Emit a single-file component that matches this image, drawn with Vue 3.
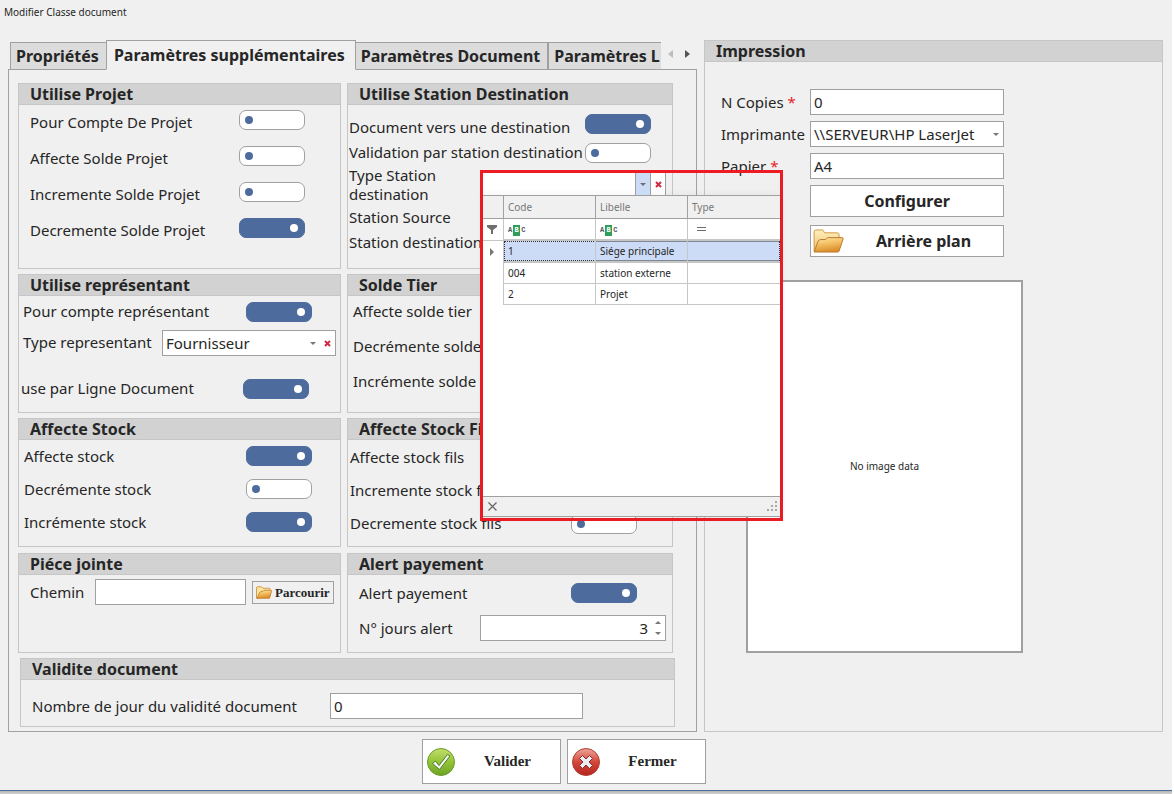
<script setup>
import { ref, reactive } from 'vue'

const tabs = ['Propriétés', 'Paramètres supplémentaires', 'Paramètres Document', 'Paramètres L']
const activeTab = ref(1)

const projet = reactive([
  { id: 'pcp', label: 'Pour Compte De Projet', on: false },
  { id: 'asp', label: 'Affecte Solde Projet', on: false },
  { id: 'isp', label: 'Incremente Solde Projet', on: false },
  { id: 'dsp', label: 'Decremente Solde Projet', on: true }
])
const tier = reactive([
  { id: 'ast', label: 'Affecte solde tier', on: false },
  { id: 'dst', label: 'Decrémente solde', on: false },
  { id: 'ist', label: 'Incrémente solde', on: false }
])
const stock = reactive([
  { id: 'as', label: 'Affecte stock', on: true },
  { id: 'ds', label: 'Decrémente stock', on: false },
  { id: 'is', label: 'Incrémente stock', on: true }
])
const fils = reactive([
  { id: 'asf', label: 'Affecte stock fils', on: false },
  { id: 'isf', label: 'Incremente stock fils', on: false },
  { id: 'dsf', label: 'Decremente stock fils', on: false }
])
const form = reactive({
  versDestination: true,
  validationStation: false,
  compteRepresentant: true,
  parLigne: true,
  alert: true,
  jours: '3',
  chemin: '',
  validite: '0',
  copies: '0',
  papier: 'A4',
  typeStation: ''
})
const stations = [
  { code: '1', libelle: 'Siége principale' },
  { code: '004', libelle: 'station externe' },
  { code: '2', libelle: 'Projet' }
]
const selected = ref('1')
</script>

<template>
  <div class="window">
    <header class="title">Modifier Classe document</header>

    <main class="main">
      <div class="left">
        <div class="tabbar">
          <div class="tablist" role="tablist">
            <button
              v-for="(t, i) in tabs"
              :key="t"
              type="button"
              role="tab"
              class="tab"
              :class="{ active: i === activeTab }"
              :aria-selected="i === activeTab"
              @click="activeTab = i"
            >{{ t }}</button>
          </div>
          <div class="tabnav">
            <button type="button" aria-label="Onglet précédent" disabled>
              <svg width="5" height="8" viewBox="0 0 5 8"><path d="M5 0v8L0 4z" fill="#bdbdbd" /></svg>
            </button>
            <button type="button" aria-label="Onglet suivant">
              <svg width="5" height="8" viewBox="0 0 5 8"><path d="M0 0v8l5-4z" fill="#555" /></svg>
            </button>
          </div>
        </div>

        <div class="panel">
          <div class="groups">
            <section class="group g-projet">
              <h2>Utilise Projet</h2>
              <div class="body">
                <div v-for="r in projet" :key="r.id" class="row">
                  <label :for="r.id">{{ r.label }}</label>
                  <input :id="r.id" v-model="r.on" type="checkbox" role="switch" class="switch" />
                </div>
              </div>
            </section>

            <section class="group g-station">
              <h2>Utilise Station Destination</h2>
              <div class="body">
                <div class="row">
                  <label for="vd">Document vers une destination</label>
                  <input id="vd" v-model="form.versDestination" type="checkbox" role="switch" class="switch up" />
                </div>
                <div class="row">
                  <label for="vs">Validation par station destination</label>
                  <input id="vs" v-model="form.validationStation" type="checkbox" role="switch" class="switch" />
                </div>
                <div class="row two">
                  <label for="ts">Type Station<br />destination</label>
                  <div class="lookup">
                    <div class="frame">
                      <div class="combo">
                        <input id="ts" v-model="form.typeStation" type="text" />
                        <button type="button" class="drop" aria-label="Ouvrir">
                          <svg width="6" height="3" viewBox="0 0 6 3"><path d="M0 0h6L3 3z" fill="#6b6f78" /></svg>
                        </button>
                        <button type="button" class="clear" aria-label="Effacer">
                          <svg width="7" height="7" viewBox="0 0 7 7"><path d="M1 1l5 5M6 1L1 6" stroke="#d12a45" stroke-width="2" /></svg>
                        </button>
                      </div>
                      <div class="popup">
                        <table class="grid">
                          <colgroup><col class="c0" /><col /><col /><col /></colgroup>
                          <thead>
                            <tr><th></th><th>Code</th><th>Libelle</th><th>Type</th></tr>
                            <tr class="filter">
                              <td class="ind">
                                <svg width="10" height="9" viewBox="0 0 10 9"><path d="M0 0h10v2L6 5v4H4V5L0 2z" fill="#6e6e6e" /></svg>
                              </td>
                              <td><span class="abc">A<b>B</b>C</span></td>
                              <td><span class="abc">A<b>B</b>C</span></td>
                              <td class="eq">
                                <svg width="9" height="4" viewBox="0 0 9 4"><path d="M0 .5h9M0 3.5h9" stroke="#6e6e6e" /></svg>
                              </td>
                            </tr>
                          </thead>
                          <tbody>
                            <tr
                              v-for="s in stations"
                              :key="s.code"
                              :class="{ sel: s.code === selected }"
                              @click="selected = s.code"
                            >
                              <td class="ind">
                                <svg v-if="s.code === selected" width="4" height="8" viewBox="0 0 4 8"><path d="M0 0v8l4-4z" fill="#777" /></svg>
                              </td>
                              <td>{{ s.code }}</td>
                              <td>{{ s.libelle }}</td>
                              <td></td>
                            </tr>
                          </tbody>
                        </table>
                        <div class="status">
                          <button type="button" aria-label="Fermer la liste">
                            <svg width="9" height="9" viewBox="0 0 9 9"><path d="M.5.5l8 8M8.5.5l-8 8" stroke="#666" stroke-width="1.3" /></svg>
                          </button>
                          <svg width="11" height="11" viewBox="0 0 11 11" fill="#a8a8a8">
                            <path d="M8 0h2v2H8zM4 4h2v2H4zM8 4h2v2H8zM0 8h2v2H0zM4 8h2v2H4zM8 8h2v2H8z" />
                          </svg>
                        </div>
                      </div>
                    </div>
                  </div>
                </div>
                <div class="row"><span>Station Source</span></div>
                <div class="row"><span>Station destination</span></div>
              </div>
            </section>

            <section class="group g-rep">
              <h2>Utilise représentant</h2>
              <div class="body">
                <div class="row">
                  <label for="cr">Pour compte représentant</label>
                  <input id="cr" v-model="form.compteRepresentant" type="checkbox" role="switch" class="switch" />
                </div>
                <div class="row type">
                  <label for="tr">Type representant</label>
                  <div class="select">
                    <select id="tr"><option>Fournisseur</option></select>
                    <svg class="arrow" width="6" height="3" viewBox="0 0 6 3"><path d="M0 0h6L3 3z" fill="#777" /></svg>
                    <button type="button" class="clear" aria-label="Effacer">
                      <svg width="7" height="7" viewBox="0 0 7 7"><path d="M1 1l5 5M6 1L1 6" stroke="#d12a45" stroke-width="2" /></svg>
                    </button>
                  </div>
                </div>
                <div class="row ligne">
                  <label for="pl">use par Ligne Document</label>
                  <input id="pl" v-model="form.parLigne" type="checkbox" role="switch" class="switch" />
                </div>
              </div>
            </section>

            <section class="group g-tier">
              <h2>Solde Tier</h2>
              <div class="body">
                <div v-for="r in tier" :key="r.id" class="row">
                  <label :for="r.id">{{ r.label }}</label>
                  <input :id="r.id" v-model="r.on" type="checkbox" role="switch" class="switch" />
                </div>
              </div>
            </section>

            <section class="group g-stock">
              <h2>Affecte Stock</h2>
              <div class="body">
                <div v-for="r in stock" :key="r.id" class="row">
                  <label :for="r.id">{{ r.label }}</label>
                  <input :id="r.id" v-model="r.on" type="checkbox" role="switch" class="switch" />
                </div>
              </div>
            </section>

            <section class="group g-fils">
              <h2>Affecte Stock Fils</h2>
              <div class="body">
                <div v-for="r in fils" :key="r.id" class="row">
                  <label :for="r.id">{{ r.label }}</label>
                  <input :id="r.id" v-model="r.on" type="checkbox" role="switch" class="switch" />
                </div>
              </div>
            </section>

            <section class="group g-piece">
              <h2>Piéce jointe</h2>
              <div class="body">
                <div class="row">
                  <label for="ch">Chemin</label>
                  <input id="ch" v-model="form.chemin" type="text" class="field" />
                  <button type="button" class="browse">
                    <svg width="16" height="13" viewBox="0 0 32 25">
                      <path d="M1 24V3q0-2 2-2h8l3 3h13q1 0 1 2v14z" fill="#fbe3a0" stroke="#c98a35" stroke-width="1.6" />
                      <path d="M2 24l5-11q1-2 3-2l4-1 2-2h14q2 0 1 2l-4 14z" fill="url(#fold)" stroke="#c07a28" stroke-width="1.6" />
                    </svg>
                    Parcourir
                  </button>
                </div>
              </div>
            </section>

            <section class="group g-alert">
              <h2>Alert payement</h2>
              <div class="body">
                <div class="row">
                  <label for="al">Alert payement</label>
                  <input id="al" v-model="form.alert" type="checkbox" role="switch" class="switch" />
                </div>
                <div class="row jours">
                  <label for="nj">N° jours alert</label>
                  <div class="spin">
                    <input id="nj" v-model="form.jours" type="text" />
                    <div class="steps">
                      <button type="button" aria-label="Augmenter">
                        <svg width="6" height="3" viewBox="0 0 6 3"><path d="M0 3h6L3 0z" fill="#777" /></svg>
                      </button>
                      <button type="button" aria-label="Diminuer">
                        <svg width="6" height="3" viewBox="0 0 6 3"><path d="M0 0h6L3 3z" fill="#777" /></svg>
                      </button>
                    </div>
                  </div>
                </div>
              </div>
            </section>
          </div>

          <section class="group g-valid">
            <h2>Validite document</h2>
            <div class="body">
              <div class="row">
                <label for="va">Nombre de jour du validité document</label>
                <input id="va" v-model="form.validite" type="text" class="field" />
              </div>
            </div>
          </section>
        </div>
      </div>

      <section class="group g-print">
        <h2>Impression</h2>
        <div class="body">
          <div class="print">
            <label for="nc">N Copies <i>*</i></label>
            <input id="nc" v-model="form.copies" type="text" class="field" />
            <label for="im">Imprimante</label>
            <div class="select">
              <select id="im"><option>\\SERVEUR\HP LaserJet</option></select>
              <svg class="arrow" width="6" height="3" viewBox="0 0 6 3"><path d="M0 0h6L3 3z" fill="#777" /></svg>
            </div>
            <label for="pa">Papier <i>*</i></label>
            <input id="pa" v-model="form.papier" type="text" class="field" />
            <button type="button" class="wide">Configurer</button>
            <button type="button" class="wide plan">
              <svg width="31" height="24" viewBox="0 0 32 25">
                <defs>
                  <linearGradient id="fold" x1="0" y1="0" x2="0.3" y2="1">
                    <stop offset="0" stop-color="#fdeaa8" />
                    <stop offset="0.5" stop-color="#f3bf62" />
                    <stop offset="1" stop-color="#dc8f2c" />
                  </linearGradient>
                  <linearGradient id="back" x1="0" y1="0" x2="0" y2="1">
                    <stop offset="0" stop-color="#fff2c0" />
                    <stop offset="1" stop-color="#eebb66" />
                  </linearGradient>
                </defs>
                <path d="M1 23V3q0-2 2-2h7l2 3h13q2 0 2 2v14z" fill="url(#back)" stroke="#cf9540" />
                <path d="M1 24l4-11q1-2 3-2h5l2-2h15q2 0 1 2l-4 12q0 1-2 1z" fill="url(#fold)" stroke="#b8752a" />
              </svg>
              <span>Arrière plan</span>
            </button>
          </div>
          <div class="image">No image data</div>
        </div>
      </section>
    </main>

    <footer class="actions">
      <button type="button">
        <svg width="28" height="28" viewBox="0 0 28 28">
          <defs>
            <linearGradient id="ok" x1="0" y1="0" x2="0" y2="1">
              <stop offset="0" stop-color="#c3de6c" />
              <stop offset="0.5" stop-color="#93c437" />
              <stop offset="1" stop-color="#6da324" />
            </linearGradient>
          </defs>
          <circle cx="14" cy="14" r="13.5" fill="url(#ok)" stroke="#6a9a2c" />
          <path d="M5.500 15.500l3-2.500 3.500 4.500L20.500 6.500l2.500 1.500L12.500 21.500z" fill="#f2f6f8" stroke="#4e7d22" />
        </svg>
        <span>Valider</span>
      </button>
      <button type="button">
        <svg width="28" height="28" viewBox="0 0 28 28">
          <defs>
            <linearGradient id="ko" x1="0" y1="0" x2="0" y2="1">
              <stop offset="0" stop-color="#eda79a" />
              <stop offset="0.5" stop-color="#d2483a" />
              <stop offset="1" stop-color="#b5241c" />
            </linearGradient>
          </defs>
          <circle cx="14" cy="14" r="13.5" fill="url(#ko)" stroke="#b04036" />
          <path d="M10.500 7.500l3.500 3.500 3.500-3.500 3 3-3.500 3.500 3.500 3.500-3 3-3.500-3.500-3.500 3.500-3-3 3.500-3.500-3.500-3.500z" fill="#e9eef4" stroke="#8e2a24" stroke-linejoin="round" />
        </svg>
        <span>Fermer</span>
      </button>
    </footer>
  </div>
</template>

<style>
body {
  margin: 0;
  background: #fff;
}
</style>

<style scoped>
* {
  box-sizing: border-box;
}
.window {
  display: flex;
  flex-direction: column;
  min-height: 100vh;
  margin-right: 2px;
  padding-bottom: 7px;
  background: linear-gradient(#4d6c9d, #4d6c9d) left bottom 3px / 100% 1px no-repeat,
    linear-gradient(#b5b5b5, #d2d2d2) left bottom / 100% 3px no-repeat, #f0f0f0;
  font: 15px/19px "Noto Sans", "Open Sans", sans-serif;
  color: #262626;
}
input,
select,
button {
  font: inherit;
  color: inherit;
  margin: 0;
}
button {
  padding: 0;
  border: 0;
  background: none;
}
svg {
  display: block;
  flex: none;
}
.title {
  height: 40px;
  padding: 4px;
  font-size: 10px;
  line-height: 16px;
}
.main {
  display: grid;
  grid-template-columns: minmax(0, 689fr) minmax(0, 459fr);
  gap: 7px;
  padding: 0 9px 0 8px;
}
.left {
  display: flex;
  flex-direction: column;
  min-width: 0;
}

/* Tabs */
.tabbar {
  display: flex;
  position: relative;
  z-index: 1;
  margin-bottom: -1px;
  padding-left: 2px;
}
.tablist {
  display: flex;
  align-items: flex-end;
  flex: 1;
  overflow: hidden;
}
.tab {
  flex: none;
  height: 28px;
  padding: 0 7px 0 5px;
  border: 1px solid #a0a0a0;
  background: #dcdcdc;
  font-size: 16px;
  font-weight: bold;
  white-space: nowrap;
}
.tab.active {
  height: 30px;
  padding: 0 10px 0 7px;
  border-bottom-color: #f0f0f0;
  background: #f0f0f0;
}
.tab:first-child {
  border-right: 0;
}
.tab.active + .tab {
  border-left: 0;
}
.tabnav {
  display: flex;
  gap: 12px;
  width: 36px;
  padding: 0 0 2px 7px;
}
.panel {
  flex: 1;
  padding: 13px 23px 4px 9px;
  border: 1px solid #a0a0a0;
}
.groups {
  display: grid;
  grid-template-columns: minmax(0, 323fr) minmax(0, 326fr);
  column-gap: 6px;
  row-gap: 5px;
}

/* Group boxes */
.group {
  border: 1px solid #c6c6c6;
}
h2 {
  margin: 0;
  height: 21px;
  padding-left: 11px;
  border-bottom: 1px solid #c6c6c6;
  background: #d2d2d2;
  font-size: 16px;
  line-height: 20px;
}
.row {
  display: flex;
  align-items: center;
  justify-content: space-between;
  white-space: nowrap;
}
.switch {
  appearance: none;
  flex: none;
  width: 66px;
  height: 20px;
  border: 1px solid #a0a0a0;
  border-radius: 7px;
  background: #fff;
  display: flex;
  align-items: center;
  padding: 0 5px;
}
.switch::before {
  content: "";
  width: 8px;
  height: 8px;
  border-radius: 50%;
  background: #4d6c9d;
}
.switch:checked {
  justify-content: flex-end;
  padding-right: 6px;
  border-color: #4d6c9d;
  background: #4d6c9d;
}
.switch:checked::before {
  background: #fff;
}
.field {
  height: 26px;
  padding: 0 3px;
  border: 1px solid #a0a0a0;
  background: #fff;
  min-width: 0;
}

.g-projet .body {
  padding: 0 35px 19px 11px;
}
.g-projet .row {
  height: 36px;
  padding-bottom: 2px;
}
.g-projet .switch {
  margin-bottom: 4px;
}
.g-station .body {
  padding: 10px 21px 0 1px;
}
.g-station .row {
  height: 25px;
}
.g-station .row.two {
  height: 40px;
}
.g-station .up {
  margin-bottom: 7px;
}
.g-rep .body {
  padding: 0 28px 3px 4px;
}
.g-rep .row {
  height: 32px;
}
.g-rep .row > label {
  padding-bottom: 2px;
}
.g-rep .type {
  height: 30px;
  margin-right: -24px;
}
.g-rep .type .select {
  width: 174px;
}
.g-rep .ligne {
  height: 40px;
  margin: 11px 3px 0 -2px;
}
.g-tier .body {
  padding: 0 35px 0 5px;
}
.g-tier .row {
  height: 35px;
  padding-bottom: 5px;
}
.g-stock .body {
  padding: 0 28px 7px 5px;
}
.g-stock .row,
.g-fils .row {
  height: 33px;
}
.g-stock .switch {
  margin-bottom: 2px;
}
.g-fils .body {
  padding: 1px 35px 0 2px;
}
.g-piece,
.g-alert {
  margin-top: 1px;
}
.g-piece .body {
  padding: 4px 6px 0 11px;
}
.g-piece .field {
  flex: 1;
  margin: 0 6px 0 11px;
}
.browse {
  display: flex;
  align-items: center;
  gap: 3px;
  width: 82px;
  height: 23px;
  padding-left: 3px;
  border: 1px solid #a0a0a0;
  font: bold 13px/19px "Liberation Serif", serif;
}
.g-alert .body {
  padding: 0 35px 7px 11px;
}
.g-alert .row {
  height: 36px;
}
.g-alert .jours {
  height: 34px;
  margin-right: -29px;
}
.spin {
  display: flex;
  width: 186px;
  height: 26px;
  border: 1px solid #a0a0a0;
  background: #fff;
}
.spin input {
  flex: 1;
  min-width: 0;
  padding: 0 3px 0 0;
  border: 0;
  background: none;
  text-align: right;
}
.steps {
  display: flex;
  flex-direction: column;
  justify-content: space-between;
  width: 14px;
  padding: 5px 4px;
}
.steps button {
  display: block;
}
.g-valid {
  margin: 5px -2px 0 2px;
}
.g-valid .body {
  padding: 13px 91px 7px 11px;
}
.g-valid .field {
  width: 253px;
}

/* Drop-downs */
.select {
  display: flex;
  align-items: center;
  height: 26px;
  border: 1px solid #a0a0a0;
  background: #fff;
}
.select select {
  appearance: none;
  flex: 1;
  min-width: 0;
  height: 24px;
  padding: 0 0 0 3px;
  border: 0;
  background: none;
}
.select .arrow {
  margin-right: 4px;
}
.clear {
  display: flex;
  align-items: center;
  justify-content: center;
  width: 15px;
}

/* Lookup list opened over the form */
.lookup {
  position: relative;
  width: 171px;
  height: 26px;
}
.frame {
  position: absolute;
  z-index: 5;
  left: 0;
  top: -2px;
  width: 303px;
  padding-bottom: 1px;
  border: 3px solid #ed1c24;
  font-size: 10px;
  line-height: 16px;
}
.combo {
  display: flex;
  width: 183px;
  height: 22px;
  border-right: 1px solid #a0a0a0;
  background: #fff;
}
.combo input {
  flex: 1;
  min-width: 0;
  border: 0;
  background: none;
  padding: 0 4px;
}
.combo .drop {
  display: flex;
  align-items: center;
  justify-content: center;
  width: 16px;
  border: solid #a0a0a0;
  border-width: 0 1px;
  background: #cddcf6;
}
.combo .clear {
  width: 14px;
}
.popup {
  display: flex;
  flex-direction: column;
  height: 322px;
  border: solid #a0a0a0;
  border-width: 1px 0;
  background: #fff;
  box-shadow: 0 0 8px rgba(0, 0, 0, 0.06);
}
.grid {
  width: 100%;
  table-layout: fixed;
  border-collapse: separate;
  border-spacing: 0;
}
.c0 {
  width: 21px;
}
.grid th,
.grid td {
  height: 21px;
  padding: 0 4px;
  border: solid #c6c6c6;
  border-width: 0 1px 1px 0;
  text-align: left;
  font-weight: normal;
}
.grid tr > :last-child {
  border-right: 0;
}
.grid th {
  height: 23px;
  border-color: #a0a0a0;
  background: #f0f0f0;
  color: #777;
}
.grid .filter td {
  height: 22px;
  border-bottom-width: 2px;
}
.grid .ind {
  padding: 0 0 0 4px;
}
.grid tbody .ind {
  padding-left: 7px;
  border-bottom: 0;
}
.grid .filter .ind {
  border-bottom-width: 1px;
}
.grid .eq {
  padding-left: 9px;
}
.grid .sel td {
  height: 22px;
  border-bottom-width: 2px;
}
.grid .sel td:not(.ind) {
  background: linear-gradient(90deg, #333 50%, transparent 0) top / 2px 1px repeat-x,
    linear-gradient(90deg, #333 50%, transparent 0) bottom / 2px 1px repeat-x, #cddcf6;
}
.grid .sel .ind {
  border-bottom: 0;
}
.grid .sel td:nth-child(2) {
  padding-left: 3px;
  border-left: 1px dotted #333;
}
.grid .sel td:last-child {
  border-right: 1px dotted #333;
}
.abc {
  display: inline-flex;
  align-items: center;
  gap: 1px;
  vertical-align: middle;
  font: bold 7px/11px "Liberation Mono", monospace;
  color: #555;
}
.abc b {
  width: 7px;
  height: 11px;
  background: #2f9e57;
  color: #fff;
  text-align: center;
}
.status {
  display: flex;
  align-items: center;
  justify-content: space-between;
  height: 20px;
  margin-top: auto;
  padding: 0 2px 0 5px;
  border-top: 1px solid #a0a0a0;
  background: #f0f0f0;
}

/* Printing */
.g-print .body {
  padding: 27px 16px 0;
}
.print {
  display: grid;
  grid-template-columns: 82px 194px;
  column-gap: 7px;
  row-gap: 6px;
  align-items: center;
  white-space: nowrap;
}
.print i {
  color: #e8222c;
  font-style: normal;
}
.wide {
  grid-column: 2;
  height: 32px;
  border: 1px solid #a0a0a0;
  background: #fff;
  font-size: 16px;
  font-weight: bold;
}
.plan {
  display: flex;
  align-items: center;
  margin-top: 2px;
  padding-left: 2px;
}
.plan span {
  flex: 1;
  text-align: center;
}
.image {
  display: flex;
  align-items: center;
  justify-content: center;
  width: 277px;
  height: 373px;
  margin: 23px 0 0 25px;
  border: 2px solid #a0a0a0;
  background: #fff;
  font-size: 10px;
}

/* Bottom buttons */
.actions {
  display: flex;
  justify-content: center;
  gap: 6px;
  margin-top: 7px;
  padding-right: 44px;
}
.actions button {
  display: flex;
  align-items: center;
  width: 139px;
  height: 45px;
  padding-left: 4px;
  border: 1px solid #a0a0a0;
  background: #fff;
  font: bold 15px/19px "Liberation Serif", serif;
}
.actions span {
  flex: 1;
  text-align: center;
}
</style>
